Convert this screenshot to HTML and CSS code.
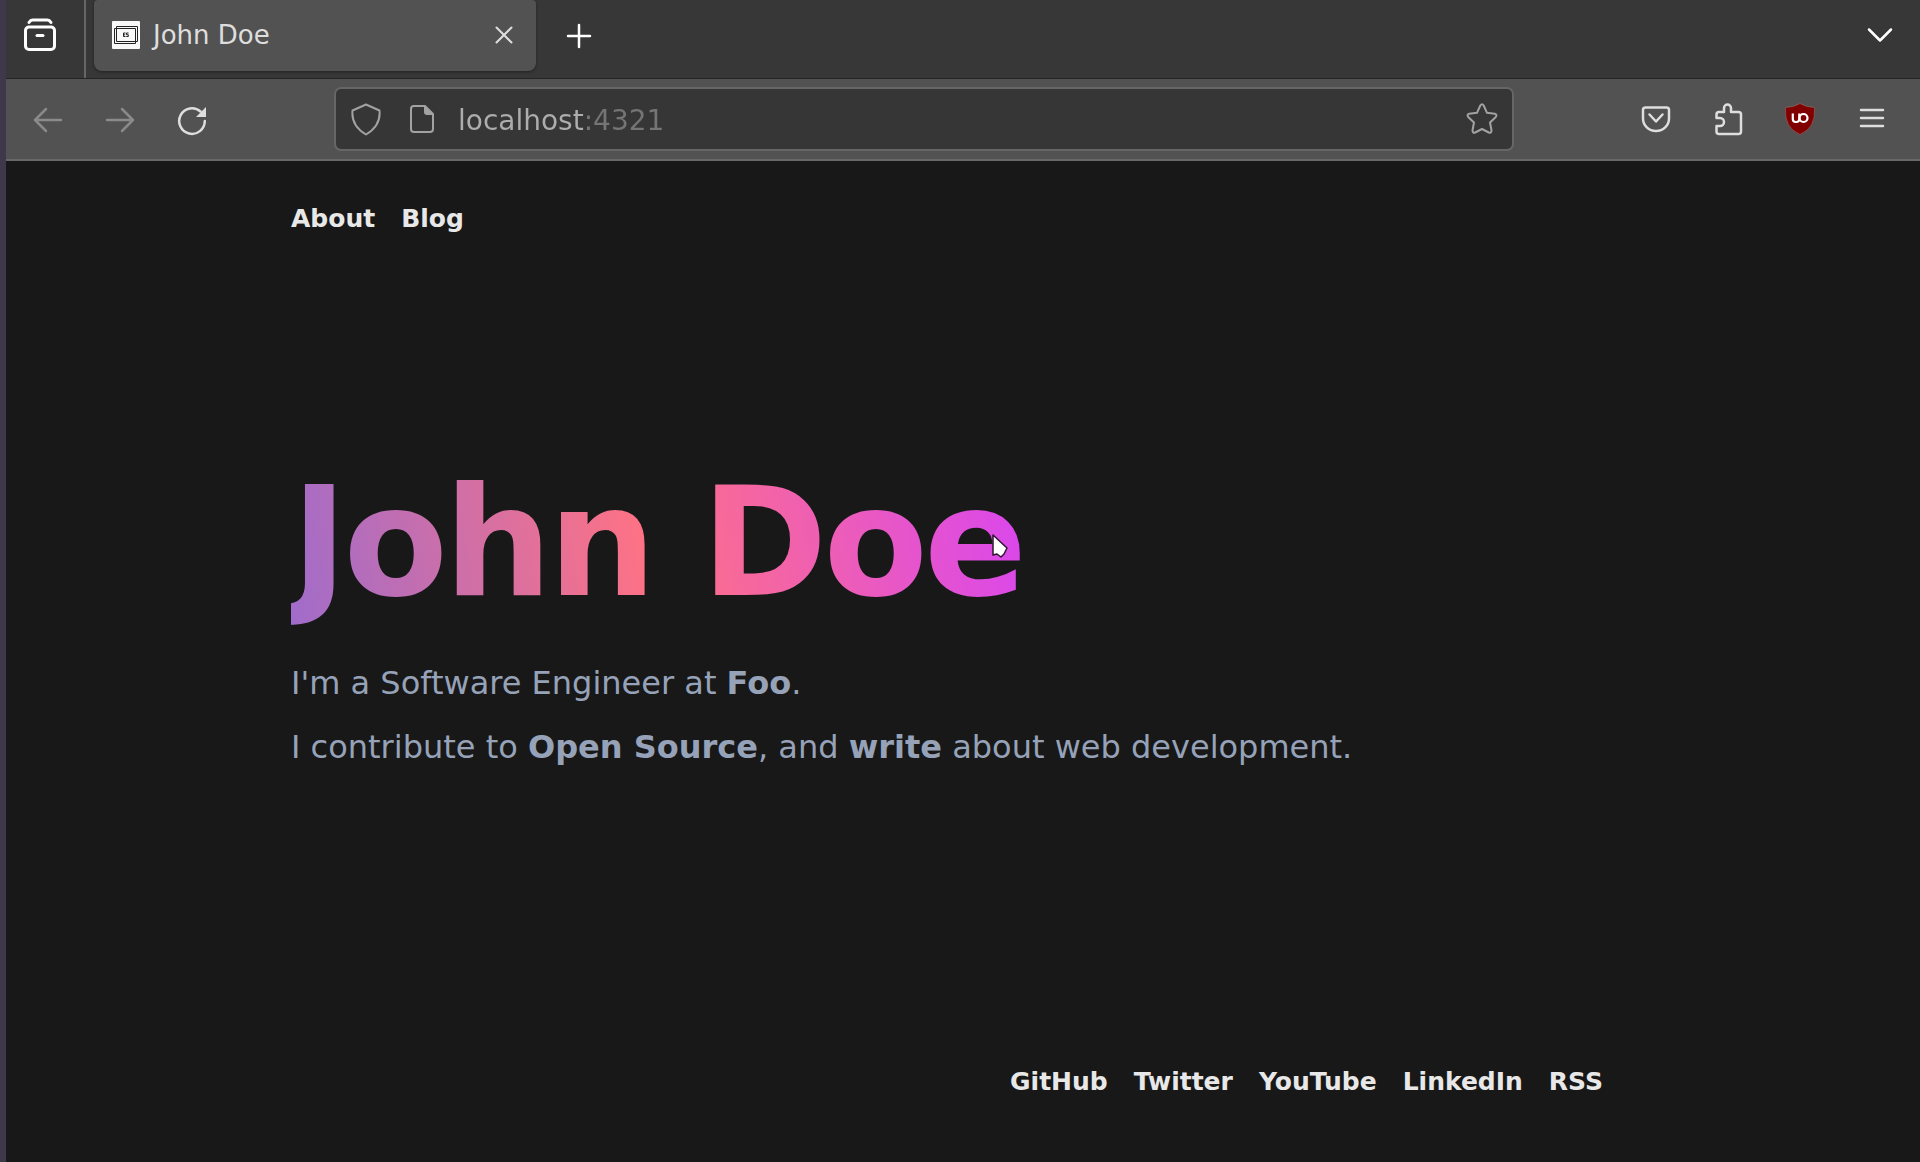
FILE: index.html
```html
<!DOCTYPE html>
<html lang="en">
<head>
<meta charset="utf-8">
<title>John Doe</title>
<link rel="stylesheet" href="styles.css">
</head>
<body>
<div class="window">
  <div class="tabs">
    <button class="view-button" aria-label="Recent browsing">
      <svg class="icon bold" width="36" height="36" viewBox="0 0 36 36"><rect x="3.500" y="10" width="29" height="22.500" rx="3.500"/><path d="M7 5.500q1.500-2.500 3.500-2.500h15q2 0 3.500 2.500"/><path d="M15 18.500h6"/></svg>
    </button>
    <div class="tab">
      <svg width="30" height="30" viewBox="0 0 30 30" aria-hidden="true"><rect x="1" y="1" width="28" height="28" rx="1" fill="#f8f8f8"/><path d="M3.500 8.500h21v15h-21zM5.500 6.500h21v15h-21z" fill="none" stroke="#222" stroke-width="1"/><path d="M14.500 13h-2v3.500h2M12.500 14.800h1.700M17.500 13h-2v1.700h1.800v1.800h-2" fill="none" stroke="#222" stroke-width="1"/></svg>
      <span class="tab-title">John Doe</span>
      <button class="close" aria-label="Close tab"><svg class="icon thin" width="18" height="18" viewBox="0 0 18 18"><path d="M1.500 1.500l15 15M16.500 1.500l-15 15"/></svg></button>
    </div>
    <button class="add" aria-label="New tab"><svg class="icon" width="26" height="26" viewBox="0 0 26 26"><path d="M13 2v22M2 13h22"/></svg></button>
    <button class="all-tabs" aria-label="List all tabs"><svg class="icon" width="26" height="16" viewBox="0 0 26 16"><path d="M2 2.500l11 11 11-11"/></svg></button>
  </div>
  <div class="toolbar">
    <button class="tool nav" aria-label="Back" disabled><svg class="icon" width="30" height="26" viewBox="0 0 30 26"><path d="M28 13H2M13 2L2 13l11 11"/></svg></button>
    <button class="tool nav" aria-label="Forward" disabled><svg class="icon" width="30" height="26" viewBox="0 0 30 26"><path d="M2 13h26M17 2l11 11-11 11"/></svg></button>
    <button class="tool nav" aria-label="Reload"><svg class="icon" width="32" height="32" viewBox="0 0 32 32"><path d="M24.500 7.500A12.800 12.800 0 1 0 28.800 17"/><path d="M30 3v10H20z" fill="currentColor" stroke="none"/></svg></button>
    <div class="address">
      <svg class="icon thin" width="32" height="34" viewBox="0 0 32 34" aria-hidden="true"><path d="M16 2.500L29.500 8.500q1.500 15-13.500 24Q1 23.500 2.500 8.500z"/></svg>
      <svg class="icon thin page-icon" width="28" height="32" viewBox="0 0 28 32" aria-hidden="true"><path d="M17 3H6Q3 3 3 6v20q0 3 3 3h16q3 0 3-3V11z"/><path d="M16 2l10 10h-7q-3 0-3-3z" fill="currentColor" stroke="none"/></svg>
      <input class="url" type="text" aria-label="Address" value="localhost:4321">
      <button class="star" aria-label="Bookmark this page"><svg class="icon thin" width="34" height="34" viewBox="0 0 34 34"><path d="M15.300 3.500q1.700-2.500 3.400 0l3.300 7.300 7.800 1q2.700.8 1 3.200l-5.800 5.500 1.500 7.800q0 3-2.700 2.200L17 27l-6.800 3.500q-2.700.8-2.700-2.200L9 20.500 3.200 15q-1.700-2.400 1-3.200l7.800-1z"/></svg></button>
    </div>
    <button class="tool" aria-label="Save to Pocket"><svg class="icon" width="30" height="28" viewBox="0 0 30 28"><path d="M4.500 2.500h21q2.500 0 2.500 2.500v8.500a13 12.500 0 0 1-26 0V5q0-2.500 2.500-2.500zM8.500 9.500l6.500 7 6.500-7"/></svg></button>
    <button class="tool" aria-label="Extensions"><svg class="icon" width="30" height="34" viewBox="0 0 30 34"><path d="M11 10V6a3.500 3.500 0 0 1 7 0v4h7.500q2.500 0 2.500 2.500v17q0 2.500-2.500 2.500H6q-2.500 0-2.500-2.500V24H7a4 4 0 0 0 0-8H3.500v-3.500Q3.500 10 6 10z"/></svg></button>
    <button class="tool" aria-label="uBlock Origin"><svg width="32" height="34" viewBox="0 0 32 34"><path d="M16 1.500q7 4 14.500 4Q32 26 16 32.500 0 26 1.500 5.500 9 5.500 16 1.500z" fill="#800000" stroke="#a06a6a" stroke-width=".6"/><path d="M8.800 11.500v5.500q0 3 3 3h.5q3 0 3-3v-5.500" fill="none" stroke="#fff" stroke-width="2.200"/><circle cx="19.500" cy="16" r="4" fill="none" stroke="#fff" stroke-width="2.200"/></svg></button>
    <button class="tool" aria-label="Menu"><svg class="icon" width="26" height="24" viewBox="0 0 26 24"><path d="M2 3h22M2 11h22M2 19h22"/></svg></button>
  </div>
  <div class="viewport">
    <div class="page">
      <nav class="links" aria-label="Main"><a href="#about">About</a><a href="#blog">Blog</a></nav>
      <main class="hero">
        <h1 class="name">John Doe</h1>
        <p>I'm a Software Engineer at <strong>Foo</strong>.</p>
        <p>I contribute to <strong>Open Source</strong>, and <strong>write</strong> about web development.</p>
        <svg class="pointer" width="18" height="26" viewBox="0 0 18 26" aria-hidden="true"><path d="M2 2l14 13-3 6-3 3-4-3-4 1z" fill="#fff" stroke="#2b1630" stroke-width="1.500" stroke-linejoin="round"/></svg>
      </main>
      <footer class="links social"><a href="#github">GitHub</a><a href="#twitter">Twitter</a><a href="#youtube">YouTube</a><a href="#linkedin">LinkedIn</a><a href="#rss">RSS</a></footer>
    </div>
  </div>
</div>
</body>
</html>
```
FILE: styles.css
```css
* {
  box-sizing: border-box;
}

body {
  margin: 0;
  background: #181818;
  font-family: "DejaVu Sans", sans-serif;
}

button {
  display: flex;
  align-items: center;
  justify-content: center;
  padding: 0;
  border: 0;
  background: none;
  color: inherit;
}

.window {
  display: flex;
  flex-direction: column;
  min-height: 100vh;
  border-left: 6px solid #3d394a;
}

.icon {
  flex: none;
  fill: none;
  stroke: currentColor;
  stroke-width: 2.5;
  stroke-linecap: round;
  stroke-linejoin: round;
}

.thin {
  stroke-width: 2;
}

.bold {
  stroke-width: 3;
}

.tabs {
  display: flex;
  height: 79px;
  padding-right: 20px;
  border-bottom: 1px solid #242424;
  background: #373737;
  color: #fff;
}

.view-button {
  width: 80px;
  padding: 0 10px 8px 0;
  border-right: 2px solid #666;
}

.tab {
  display: flex;
  align-items: center;
  width: 442px;
  height: 71px;
  margin-left: 8px;
  padding: 0 23px 2px 17px;
  border-radius: 4px 4px 8px 8px;
  background: #525252;
  box-shadow: 0 1px 3px #222;
  color: #dedede;
}

.tab-title {
  flex: 1;
  padding-left: 12px;
  font-size: 26px;
  line-height: 32px;
}

.add {
  width: 86px;
  height: 72px;
}

.all-tabs {
  height: 69px;
  margin-left: auto;
  padding: 0 7px;
}

.toolbar {
  display: flex;
  align-items: center;
  height: 82px;
  padding: 0 12px 0 6px;
  border-bottom: 2px solid #686868;
  background: #525252;
  color: #dedede;
}

.tool {
  width: 72px;
  height: 72px;
}

.nav {
  padding-top: 2px;
}

.tool:disabled {
  color: #8a8a8a;
}

.address {
  display: flex;
  flex: 1;
  align-items: center;
  height: 64px;
  margin: 0 106px;
  padding: 0 13px 0 14px;
  border: 2px solid #666;
  border-radius: 7px;
  background: #363636;
  color: #a2a2a2;
}

.page-icon {
  margin-left: 26px;
}

.url {
  flex: 1;
  min-width: 0;
  height: 42px;
  margin-left: 22px;
  padding: 2px 0 0;
  border: 0;
  outline: 0;
  background: linear-gradient(90deg, #adadad 126px, #757575 126px);
  background-clip: text;
  -webkit-background-clip: text;
  color: transparent;
  font: 28px/40px "DejaVu Sans", sans-serif;
}

.viewport {
  display: flex;
  flex: 1;
  justify-content: center;
  padding: 42px 64px 64px 32px;
}

.page {
  display: flex;
  flex-direction: column;
  justify-content: space-between;
  width: 100%;
  max-width: 1312px;
}

.links {
  display: flex;
  gap: 26px;
  font-size: 25px;
  font-weight: bold;
  line-height: 32px;
}

.links a {
  color: #e8e8e8;
  text-decoration: none;
}

.social {
  justify-content: flex-end;
}

.hero {
  position: relative;
  padding-bottom: 52px;
  color: #96a2b8;
}

.name {
  width: fit-content;
  margin: 0 0 36px;
  background: linear-gradient(80deg, #a06cca, #ff7284 49%, #d946ef);
  background-clip: text;
  -webkit-background-clip: text;
  color: transparent;
  font-size: 152px;
  letter-spacing: -4px;
  line-height: 168px;
}

.hero p {
  margin: 0 0 24px;
  font-size: 32px;
  line-height: 40px;
}

.pointer {
  position: absolute;
  top: 74px;
  left: 700px;
}
```
